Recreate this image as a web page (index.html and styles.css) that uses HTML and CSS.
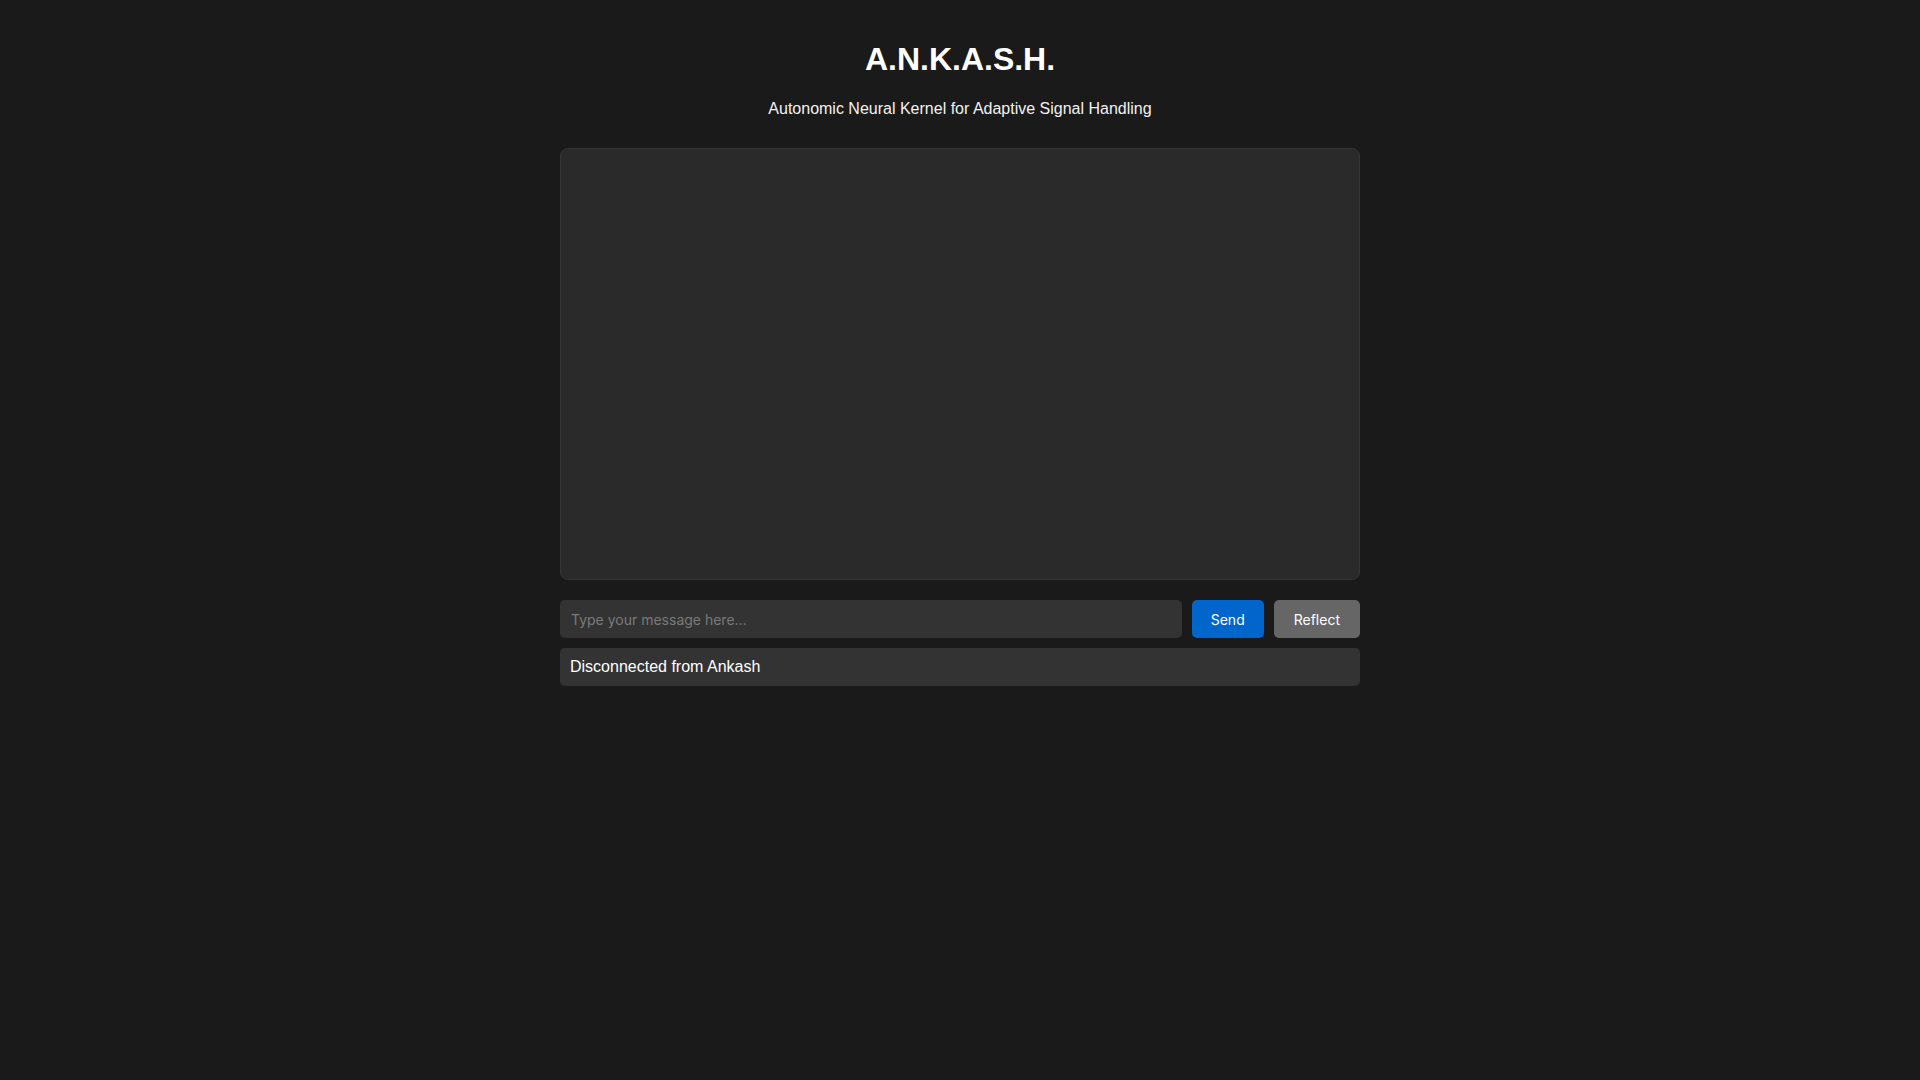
FILE: index.html
```html
<!DOCTYPE html>
<html lang="en">
<head>
<meta charset="utf-8">
<title>A.N.K.A.S.H.</title>
<link rel="stylesheet" href="styles.css">
</head>
<body>
<div class="container">
  <header class="header">
    <h1 class="title">A.N.K.A.S.H.</h1>
    <p class="subtitle">Autonomic Neural Kernel for Adaptive Signal Handling</p>
  </header>
  <div class="chat"></div>
  <div class="input-row">
    <input class="message-input" type="text" placeholder="Type your message here...">
    <button class="btn btn-send">Send</button>
    <button class="btn btn-reflect">Reflect</button>
  </div>
  <div class="status">Disconnected from Ankash</div>
</div>
</body>
</html>
```
FILE: styles.css
```css
* { box-sizing: border-box; }
html, body { margin: 0; padding: 0; }
body {
  background: #1a1a1a;
  color: #ffffff;
  font-family: "Liberation Sans", Arial, sans-serif;
  height: 1080px;
}
.container {
  width: 800px;
  margin: 0 auto;
  padding: 20px 0;
}
.header { text-align: center; }
.title {
  font-size: 32px;
  font-weight: bold;
  margin: 21.44px 0 0;
  line-height: 36.8px;
  color: #ffffff;
}
.subtitle {
  font-size: 16px;
  line-height: 18.4px;
  margin: 21.44px 0 30px;
  color: #f2f2f2;
}
.chat {
  height: 432px;
  background: #2a2a2a;
  border: 1px solid #363636;
  border-radius: 8px;
  margin-bottom: 20px;
}
.input-row {
  display: flex;
  gap: 10px;
  margin-bottom: 10px;
}
.message-input {
  flex: 1;
  height: 38px;
  border: none;
  border-radius: 5px;
  background: #333333;
  color: #ffffff;
  padding: 0 11px;
  font-family: Inter, "Liberation Sans", sans-serif;
  font-size: 14px;
  outline: none;
}
.message-input::placeholder { color: #7a7a7a; }
.btn {
  height: 38px;
  border: none;
  border-radius: 5px;
  padding: 0 20px;
  color: #ffffff;
  font-family: Inter, "Liberation Sans", sans-serif;
  font-size: 14px;
  cursor: pointer;
}
.btn-send { background: #0066cc; padding: 0 19px; }
.btn-reflect { background: #666666; }
.status {
  background: #333333;
  border-radius: 5px;
  padding: 10px 10px;
  font-size: 16px;
  line-height: 18px;
  color: #ffffff;
}
```
